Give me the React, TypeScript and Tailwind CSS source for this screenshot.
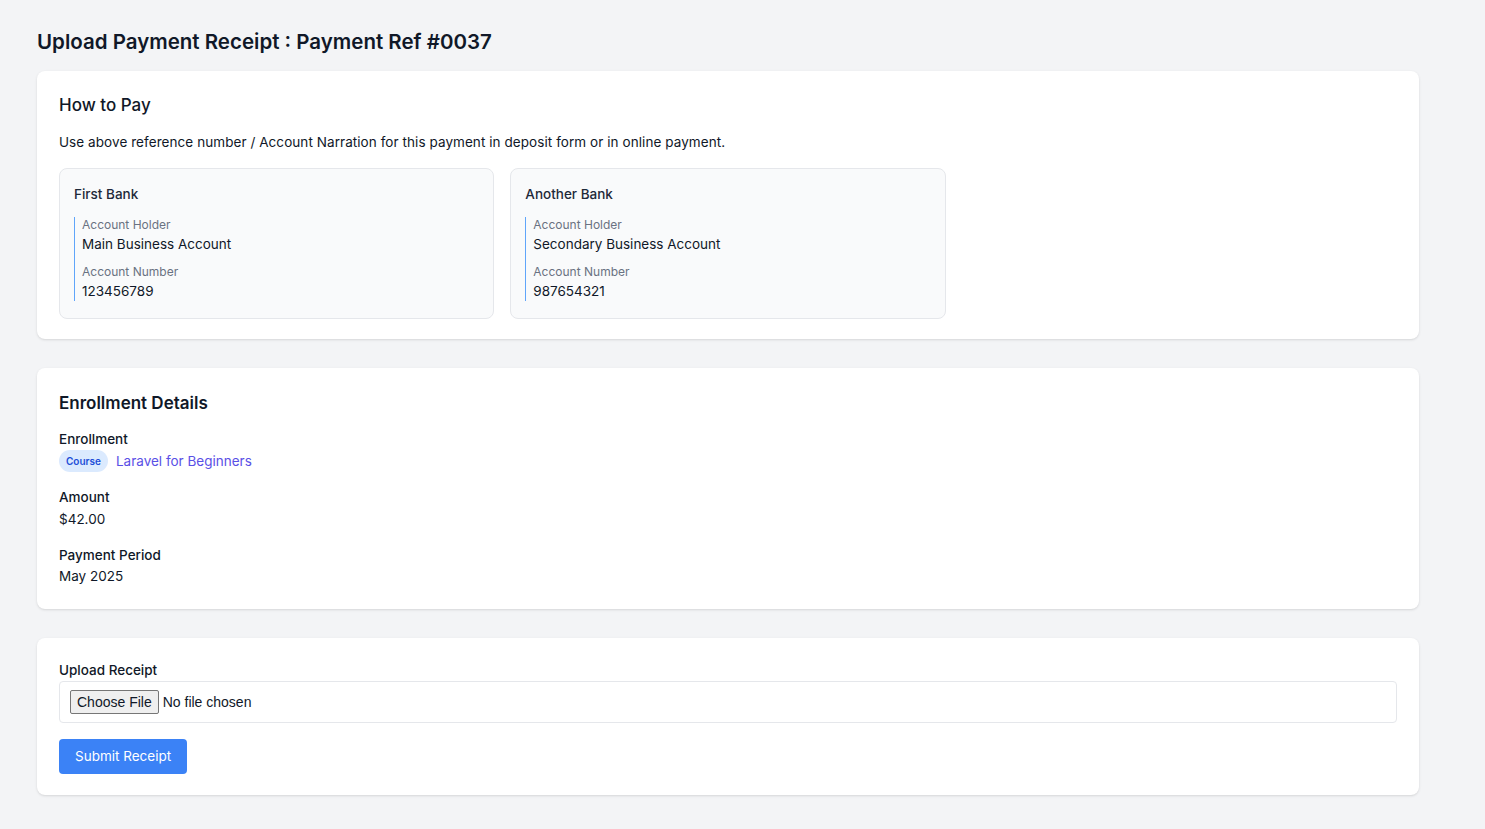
const BANKS = [
  { id: 1, name: "First Bank", holder: "Main Business Account", number: "123456789" },
  { id: 2, name: "Another Bank", holder: "Secondary Business Account", number: "987654321" },
];

const App = () => {
  return (
    <div
      className="min-h-screen bg-[#f3f4f6] px-[37px] pt-[28px] pb-8 text-gray-900"
      style={{ fontFamily: "Inter, 'Noto Sans', sans-serif" }}
    >
      <div className="w-[1382px]">
        <h1 className="text-[20.5px] font-semibold leading-7 mb-[15px]">
          Upload Payment Receipt : Payment Ref #0037
        </h1>

        <div className="bg-white rounded-lg shadow-sm px-[22px] pt-[22px] pb-[20px] mb-[29px]">
          <h2 className="text-[17px] font-medium leading-6 mb-[15px]">How to Pay</h2>
          <p className="text-[13.5px] leading-5 mb-4 tracking-[0.005em]">
            Use above reference number / Account Narration for this payment in deposit form or in online payment.
          </p>
          <div className="grid grid-cols-3 gap-4">
            {BANKS.map(({ id, name, holder, number }) => (
              <div key={id} className="bg-gray-50 border border-gray-200 rounded-lg px-[14px] pt-[15px] pb-[17px]">
                <p className="text-[13.5px] font-medium leading-5 mb-[13px] text-gray-800">{name}</p>
                <div className="border-l border-[#60a5fa] pl-[7px]">
                  <p className="text-xs text-gray-500 leading-4">Account Holder</p>
                  <p className="text-[13.5px] leading-5 mt-[1px]">{holder}</p>
                  <p className="text-xs text-gray-500 leading-4 mt-[10px]">Account Number</p>
                  <p className="text-[13.5px] leading-5 mt-[1px]">{number}</p>
                </div>
              </div>
            ))}
          </div>
        </div>

        <div className="bg-white rounded-lg shadow-sm px-[22px] pt-[23px] pb-[23px] mb-[29px]">
          <h2 className="text-[17px] font-semibold leading-6 mb-[14px]">Enrollment Details</h2>
          <div>
            <p className="text-[13.5px] font-medium leading-5">Enrollment</p>
            <div className="flex items-center gap-2 mt-[1px]">
              <span className="bg-[#dbeafe] text-[#1d4ed8] text-[10px] font-semibold rounded-full px-[7px] py-[4px] leading-[14px]">
                Course
              </span>
              <a href="#" className="text-[13.5px] text-[#5a50e6] leading-5">Laravel for Beginners</a>
            </div>
          </div>
          <div className="mt-[15px]">
            <p className="text-[13.5px] font-medium leading-5">Amount</p>
            <p className="text-[13.5px] leading-5 mt-[2px]">$42.00</p>
          </div>
          <div className="mt-[16px]">
            <p className="text-[13.5px] font-medium leading-5">Payment Period</p>
            <p className="text-[13.5px] leading-5 mt-[1px]">May 2025</p>
          </div>
        </div>

        <div className="bg-white rounded-lg shadow-sm px-[22px] pt-[22px] pb-[21px]">
          <p className="text-[13.5px] font-medium leading-5">Upload Receipt</p>
          <div className="border border-gray-200 rounded mt-[1px] px-[10px] py-[8px] flex items-center">
            <input
              type="file"
              className="h-6 text-[14px] leading-6 [font-family:'Liberation_Sans',Arial,sans-serif] file:mr-1 file:h-6 file:border file:border-[#767676] file:bg-[#efefef] file:px-[6px] file:py-0 file:text-[14px] file:leading-[20px] file:rounded-[2px] file:[font-family:'Liberation_Sans',Arial,sans-serif]"
            />
          </div>
          <button className="mt-4 bg-[#3b82f6] text-white text-[13.5px] rounded px-4 h-[35px]">
            Submit Receipt
          </button>
        </div>
      </div>
    </div>
  );
};

export default App;
